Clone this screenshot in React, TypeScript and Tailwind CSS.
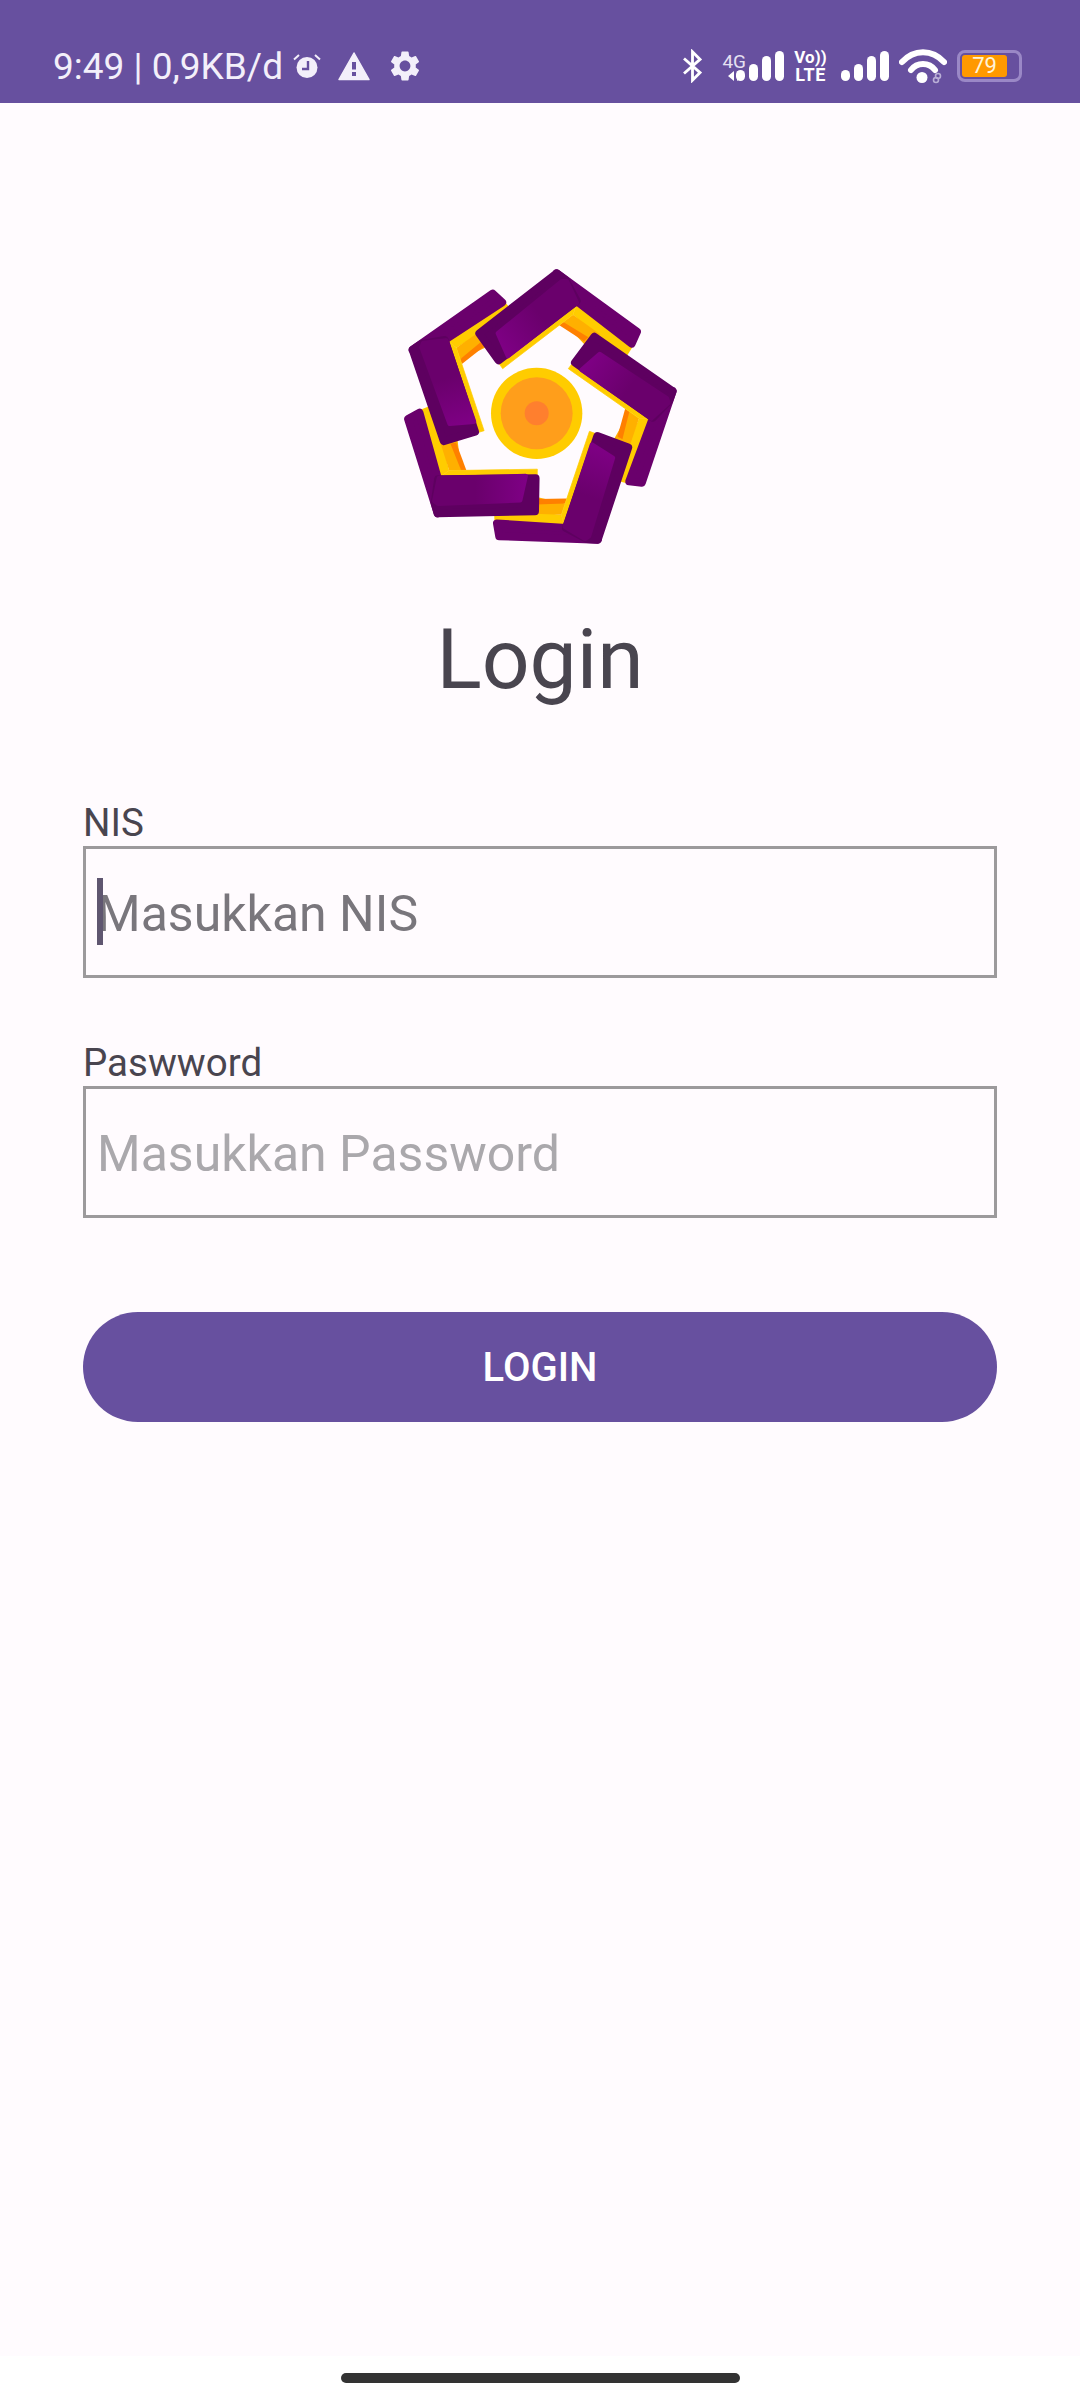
import { MdSettings } from "react-icons/md";

// Logo is drawn in the 3x crop's coordinates, one arm repeated around the centre.
// The source logo is not perfectly symmetric, so each arm has its own turn and scale.
const ARMS = [
  { rot: 0, s: 1 },
  { rot: -71, s: 0.986 },
  { rot: -143.4, s: 0.995 },
  { rot: 146.1, s: 0.993 },
  { rot: 72.6, s: 0.975 },
];
const CX = 470;
const CY = 490;

function ArmTail() {
  return (
    <>
      <polygon points="590,163 758,290 742,316 712,305 579,194" fill="#ffcc00" />
      <polygon points="579,194 660,253 620,290 550,216" fill="#ffb000" />
      <polygon points="550,216 625,262 612,274 538,226" fill="#ff8000" />
      <polygon
        points="530,70 771,245 755,281 590,153 530,200"
        fill="#6a006c"
        stroke="#6a006c"
        strokeWidth="24"
        strokeLinejoin="round"
      />
    </>
  );
}

function ArmHead() {
  return (
    <>
      <polygon
        points="358,342 590,163 579,194 368,356"
        fill="#ffcc00"
        stroke="#ffcc00"
        strokeWidth="2"
        strokeLinejoin="round"
      />
      <polygon
        points="298,250 530,70 556,90 590,153 356,331"
        fill="#5e0060"
        stroke="#5e0060"
        strokeWidth="24"
        strokeLinejoin="round"
      />
      <polygon
        points="354,250 546,94 560,94 590,158 384,318"
        fill="url(#armHead)"
        stroke="url(#armHead)"
        strokeWidth="14"
        strokeLinejoin="round"
      />
    </>
  );
}

function Logo() {
  const placed = (a: { rot: number; s: number }) =>
    `translate(${CX} ${CY}) rotate(${a.rot}) scale(${a.s}) translate(${-CX} ${-CY})`;
  return (
    <svg viewBox="0 0 960 930" width="320" height="310" className="block">
      <defs>
        <linearGradient id="armHead" gradientUnits="userSpaceOnUse" x1="350" y1="270" x2="470" y2="180">
          <stop offset="0" stopColor="#7e0084" />
          <stop offset="1" stopColor="#6a006c" />
        </linearGradient>
      </defs>
      {ARMS.map((a) => (
        <g key={a.rot} transform={placed(a)}>
          <ArmTail />
        </g>
      ))}
      {ARMS.map((a) => (
        <g key={a.rot} transform={placed(a)}>
          <ArmHead />
        </g>
      ))}
      <circle cx={CX} cy={CY} r="137" fill="#ffcc00" />
      <circle cx={CX} cy={CY} r="108" fill="#ff9e1b" />
      <circle cx={CX} cy={CY} r="36" fill="#ff7f2e" />
    </svg>
  );
}

function AlarmIcon() {
  return (
    <svg viewBox="0 0 28 28" width="28" height="28">
      <circle cx="14" cy="15.5" r="10.5" fill="#f3effa" />
      <path d="M15 9v8H9" fill="none" stroke="#67509f" strokeWidth="2.4" />
      <path d="M1 7.5 6 3M27 7.5 22 3" stroke="#f3effa" strokeWidth="2" fill="none" />
    </svg>
  );
}

function WarningIcon() {
  return (
    <svg viewBox="0 0 32 30" width="32" height="30">
      <path d="M16 2 31 28.5H1z" fill="#f3effa" stroke="#f3effa" strokeWidth="1.5" strokeLinejoin="round" />
      <rect x="14" y="11" width="4" height="7.5" fill="#67509f" />
      <rect x="14" y="21" width="4" height="4" fill="#67509f" />
    </svg>
  );
}

function Bars({ className }: { className?: string }) {
  const heights = [11, 17, 25, 30];
  return (
    <div className={`flex items-end gap-[4px] ${className ?? ""}`}>
      {heights.map((h) => (
        <span key={h} className="w-[9px] rounded-full bg-white" style={{ height: h }} />
      ))}
    </div>
  );
}

function StatusBar() {
  return (
    <div className="flex h-[103px] items-start justify-between bg-[#67509f] pl-[53px] pr-[58px] pt-[47px] text-[#f3effa]">
      <div className="mt-[3px] flex h-[32px] items-center">
        <span className="text-[37px] leading-none">9:49 | 0,9KB/d</span>
        <span className="ml-[10px]"><AlarmIcon /></span>
        <span className="ml-[17px]"><WarningIcon /></span>
        <MdSettings size={36} className="ml-[17px] text-[#f3effa]" />
      </div>
      <div className="flex h-[38px] items-center">
        <svg viewBox="0 0 24 36" width="23" height="34" className="mr-[12px]">
          <path d="M3 10 20 25l-8 8V3l8 8L3 26" fill="none" stroke="#fff" strokeWidth="3" />
        </svg>
        <div className="flex h-[30px] items-end">
          <div className="flex w-[30px] flex-col items-end">
            <span className="text-[19px] leading-[18px] text-[#e6e0f2]">4G</span>
            <svg viewBox="0 0 16 10" width="16" height="10" className="mr-[2px]">
              <path d="M6 0v10L0 5zM9 10V0l6 5z" fill="#fff" />
            </svg>
          </div>
          <Bars className="ml-[-10px]" />
        </div>
        <div className="ml-[10px] flex w-[33px] flex-col items-center font-bold text-white">
          <span className="text-[17px] leading-[17px]">Vo))</span>
          <span className="text-[18px] leading-[18px] tracking-[0.5px]">LTE</span>
        </div>
        <Bars className="ml-[14px]" />
        <svg viewBox="0 0 48 36" width="48" height="36" className="ml-[10px]">
          <path d="M3 14C15 1 33 1 45 14" fill="none" stroke="#fff" strokeWidth="6" strokeLinecap="round" />
          <path d="M12 22c6-8 18-8 24 0" fill="none" stroke="#fff" strokeWidth="6" strokeLinecap="round" />
          <circle cx="23" cy="29.5" r="5.5" fill="#fff" />
          <circle cx="39" cy="28" r="2.5" fill="none" stroke="#b9aed6" strokeWidth="1.6" />
          <circle cx="37" cy="32" r="2.5" fill="none" stroke="#b9aed6" strokeWidth="1.6" />
        </svg>
        <div className="ml-[10px] flex h-[32px] w-[65px] items-center rounded-[8px] border-[3px] border-[#9a88c6] p-[2px]">
          <div className="flex h-full w-[45px] items-center justify-center rounded-[3px] bg-[#ff9900] text-[22px] leading-none text-[#fff3d6]">
            79
          </div>
        </div>
      </div>
    </div>
  );
}

function Field({ label, hint, hintColor, caret }: { label: string; hint: string; hintColor: string; caret?: boolean }) {
  return (
    <div>
      <div className="mb-[5px] text-[38.5px] leading-[37px] text-[#49454f]">{label}</div>
      <div className="relative flex h-[132px] items-center border-[3px] border-[#9c9a9c] pl-[11px] pt-[3px]">
        {caret && <span className="absolute left-[11px] top-[29px] h-[67px] w-[6px] bg-[#5f5670]" />}
        <span className={`text-[50px] leading-none ${hintColor}`}>{hint}</span>
      </div>
    </div>
  );
}

export default function App() {
  return (
    <div className="flex h-[2400px] w-[1080px] flex-col overflow-hidden bg-[#fffbfe] font-['Roboto',sans-serif]">
      <StatusBar />
      <div className="flex flex-1 flex-col px-[83px]">
        <div className="mt-[147px] flex justify-center">
          <Logo />
        </div>
        <h1 className="mt-[50px] text-center text-[84px] leading-[100px] font-normal text-[#49454f]">Login</h1>
        <div className="mt-[94px] flex flex-col gap-[66px]">
          <Field label="NIS" hint="Masukkan NIS" hintColor="text-[#79767c]" caret />
          <Field label="Paswword" hint="Masukkan Password" hintColor="text-[#aaa8ac]" />
        </div>
        <button className="mt-[94px] h-[110px] w-full rounded-full bg-[#67509f] pt-[2px] text-[40px] font-medium text-white">
          LOGIN
        </button>
      </div>
      <div className="flex h-[44px] justify-center bg-white pt-[17px]">
        <span className="h-[10px] w-[399px] rounded-full bg-[#333333]" />
      </div>
    </div>
  );
}
